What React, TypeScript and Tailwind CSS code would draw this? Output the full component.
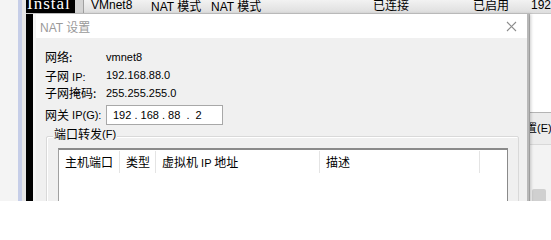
import React from "react";

const latin = "font-['Liberation_Sans','Noto_Sans_CJK_SC',sans-serif] text-[11px]";
const cjk = "font-['Noto_Sans_CJK_SC',sans-serif] text-[12px]";

const columns = [
  { label: "主机端口", w: "w-[61px]" },
  { label: "类型", w: "w-[36px]" },
  { label: "虚拟机 IP 地址", w: "w-[164px]" },
  { label: "描述", w: "w-[160px]" },
];

function Row({ label, value }: { label: React.ReactNode; value: string }) {
  return (
    <div className="flex items-center h-[18px]">
      <div className="w-[61px] flex items-center">{label}</div>
      <span className={`${latin} text-black`}>{value}</span>
    </div>
  );
}

export default function App() {
  return (
    <div className="relative w-[551px] h-[201px] overflow-hidden bg-[#f6f6f6] text-black">
      {/* desktop behind */}
      <div className="flex h-full">
        <div className="w-[20px] bg-[#f4f4f4]" />
        <div className="w-[5px] bg-[#c6cee8]" />
        <div className="w-[4px] bg-[#e6e6e6]" />
        <div className="flex-1 flex flex-col">
          <div className="h-[14px] flex bg-gradient-to-b from-[#f2f2f2] to-[#dedede] border-b border-[#c8c8c8]">
            <div className="w-[49px] bg-black overflow-hidden">
              <span className="block -mt-[5px] pl-[1px] text-white font-['Liberation_Serif',serif] text-[17px] leading-[17px] tracking-[1px]">
                Instal
              </span>
            </div>
            <div className="w-[8px] bg-[#d4d4d4]" />
            <div className="w-[1px] bg-[#a0a0a0]" />
            <div className="flex-1 relative overflow-hidden">
              <div className="flex items-center h-[12px] -mt-[1px] pl-[7px] whitespace-nowrap">
                <span className={`${latin} text-[12px] w-[60px]`}>VMnet8</span>
                <span className="w-[60px]">
                  <span className={`${latin} text-[12px]`}>NAT </span>
                  <span className={cjk}>模式</span>
                </span>
                <span className="w-[162px]">
                  <span className={`${latin} text-[12px]`}>NAT </span>
                  <span className={cjk}>模式</span>
                </span>
                <span className={`${cjk} w-[100px]`}>已连接</span>
                <span className={`${cjk} w-[58px]`}>已启用</span>
                <span className={`${latin} text-[12px]`}>192</span>
              </div>
            </div>
          </div>
          <div className="flex-1 flex">
            <div className="w-[7px] bg-black" />
            <div className="flex-1" />
            <div className="w-[22px] bg-white border-l border-[#bdbdbd] flex flex-col">
              <div className="h-[98px]" />
              <div className="h-[32px] bg-[#ececec] border-t border-[#b4b4b4] flex items-center overflow-hidden">
                <span className={`${latin} whitespace-nowrap -ml-[4px]`}>置(E).</span>
              </div>
              <div className="flex-1 bg-[#f3f3f3] border-t border-[#d8d8d8] flex flex-col justify-end">
                <div className="h-[12px] w-[14px] ml-[2px] bg-[#d0d0d0] rounded-t-[2px]" />
              </div>
            </div>
          </div>
        </div>
      </div>

      {/* NAT dialog window */}
      <div className="absolute left-[36px] top-[14px] w-[493px] h-[220px] flex flex-col bg-[#f0f0f0] border-r-2 border-[#b8b8b8] shadow-[2px_0_3px_rgba(0,0,0,0.2)]">
        <div className="h-[26px] bg-white flex items-center justify-between pl-[4px] pr-[10px]">
          <span className="text-[#9a9a9a]">
            <span className={`${latin} text-[12px]`}>NAT </span>
            <span className={cjk}>设置</span>
          </span>
          <svg width="11" height="11" viewBox="0 0 11 11" className="text-[#8c8c8c]">
            <path d="M1 1 L10 10 M10 1 L1 10" stroke="currentColor" strokeWidth="1.1" />
          </svg>
        </div>

        <div className="pt-[10px] pl-[9px]">
          <Row label={<span className={cjk}>网络:</span>} value="vmnet8" />
          <Row
            label={
              <span>
                <span className={cjk}>子网</span>
                <span className={latin}> IP:</span>
              </span>
            }
            value="192.168.88.0"
          />
          <Row label={<span className={cjk}>子网掩码:</span>} value="255.255.255.0" />

          <div className="flex items-center mt-[3px] h-[20px]">
            <div className="w-[61px] flex items-center">
              <span className={cjk}>网关</span>
              <span className={latin}>&nbsp;IP(G):</span>
            </div>
            <div className="w-[117px] h-[20px] bg-white border border-[#a8a8a8] flex items-center pl-[6px]">
              <span className={`${latin} whitespace-pre`}>192 . 168 . 88  .  2</span>
            </div>
          </div>

          {/* port forwarding group */}
          <div className="relative mt-[11px] ml-[1px] w-[473px] h-[100px] border border-[#d9d9d9] rounded-[2px] shadow-[inset_1px_1px_0_#ffffff]">
            <div className="absolute -top-[10px] left-[6px] px-[1px] bg-[#f0f0f0] flex items-center h-[14px]">
              <span className={cjk}>端口转发</span>
              <span className={latin}>(F)</span>
            </div>
            <div className="mt-[11px] ml-[11px] w-[450px] h-[80px] bg-white border-t-2 border-l border-r border-[#8a8a8a] border-l-[#a0a0a0]">
              <div className="flex h-[24px] items-center">
                {columns.map((c, i) => (
                  <div key={i} className={`${c.w} h-[22px] flex items-center pl-[6px] border-r border-[#e4e4e4]`}>
                    <span className={`${cjk} whitespace-nowrap`}>
                      {c.label.split(" ").map((part, j) =>
                        /[A-Za-z]/.test(part) ? (
                          <span key={j} className={`${latin} text-[10px]`}> {part} </span>
                        ) : (
                          <span key={j}>{part}</span>
                        )
                      )}
                    </span>
                  </div>
                ))}
              </div>
            </div>
          </div>
        </div>
      </div>
    </div>
  );
}
